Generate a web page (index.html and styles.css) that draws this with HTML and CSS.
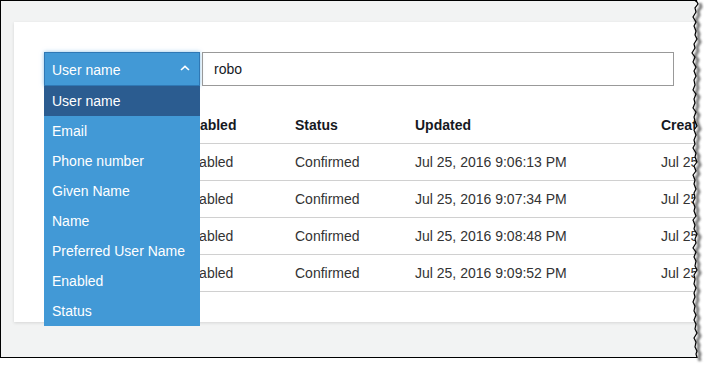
FILE: index.html
```html
<!DOCTYPE html>
<html lang="en">
<head>
    <meta charset="UTF-8">
    <meta name="viewport" content="width=device-width, initial-scale=1.0">
    <title>Users</title>
    <link rel="stylesheet" href="styles.css">
</head>
<body>
    <div class="frame">
        <div class="card">
            <div class="search">
                <div class="select">
                    <span>User name</span>
                    <svg class="caret" width="10" height="6" viewBox="0 0 10 6"><polyline points="1,5 5,1.3 9,5" fill="none" stroke="#fff" stroke-width="1.6"/></svg>
                </div>
                <div class="query">robo</div>
                <ul class="options">
                    <li class="active">User name</li>
                    <li>Email</li>
                    <li>Phone number</li>
                    <li>Given Name</li>
                    <li>Name</li>
                    <li>Preferred User Name</li>
                    <li>Enabled</li>
                    <li>Status</li>
                </ul>
            </div>
            <div class="users">
                <div class="row head">
                    <div class="c1"></div>
                    <div class="c2">Enabled</div>
                    <div class="c3">Status</div>
                    <div class="c4">Updated</div>
                    <div class="c5">Created</div>
                </div>
                <div class="row">
                    <div class="c1"></div>
                    <div class="c2">Enabled</div>
                    <div class="c3">Confirmed</div>
                    <div class="c4">Jul 25, 2016 9:06:13 PM</div>
                    <div class="c5">Jul 25, 2016 9:06:13 PM</div>
                </div>
                <div class="row">
                    <div class="c1"></div>
                    <div class="c2">Enabled</div>
                    <div class="c3">Confirmed</div>
                    <div class="c4">Jul 25, 2016 9:07:34 PM</div>
                    <div class="c5">Jul 25, 2016 9:07:34 PM</div>
                </div>
                <div class="row">
                    <div class="c1"></div>
                    <div class="c2">Enabled</div>
                    <div class="c3">Confirmed</div>
                    <div class="c4">Jul 25, 2016 9:08:48 PM</div>
                    <div class="c5">Jul 25, 2016 9:08:48 PM</div>
                </div>
                <div class="row">
                    <div class="c1"></div>
                    <div class="c2">Enabled</div>
                    <div class="c3">Confirmed</div>
                    <div class="c4">Jul 25, 2016 9:09:52 PM</div>
                    <div class="c5">Jul 25, 2016 9:09:52 PM</div>
                </div>
            </div>
        </div>
    </div>
    <svg class="tear" width="710" height="368" viewBox="0 0 710 368">
        <defs>
            <filter id="soft" x="-50%" y="-5%" width="200%" height="110%"><feGaussianBlur stdDeviation="1"/></filter>
        </defs>
        <polygon fill="#fff" points="697,0 698,4 695,8 696,12 693,17 696,22 694,26 696,31 695,35 697,39 694,44 695,48 692,53 695,57 693,62 696,67 694,71 696,76 694,80 695,85 693,90 696,94 694,99 695,103 693,108 696,112 694,117 695,121 697,126 694,130 696,135 694,140 695,144 693,148 696,153 695,157 697,162 694,166 696,171 693,175 695,180 694,184 696,189 694,193 695,198 693,202 695,207 694,211 696,216 693,220 695,225 694,229 697,234 695,239 696,243 693,248 696,252 694,257 696,261 695,266 697,270 694,275 695,279 694,284 696,288 694,293 695,297 693,302 695,306 694,311 696,315 694,320 696,324 695,329 697,333 694,338 696,342 695,347 697,351 696,354 697,358 697,368 710,368 710,0"/>
        <polyline fill="none" stroke="#777" stroke-width="3" filter="url(#soft)" transform="translate(3,3)" points="697,0 698,4 695,8 696,12 693,17 696,22 694,26 696,31 695,35 697,39 694,44 695,48 692,53 695,57 693,62 696,67 694,71 696,76 694,80 695,85 693,90 696,94 694,99 695,103 693,108 696,112 694,117 695,121 697,126 694,130 696,135 694,140 695,144 693,148 696,153 695,157 697,162 694,166 696,171 693,175 695,180 694,184 696,189 694,193 695,198 693,202 695,207 694,211 696,216 693,220 695,225 694,229 697,234 695,239 696,243 693,248 696,252 694,257 696,261 695,266 697,270 694,275 695,279 694,284 696,288 694,293 695,297 693,302 695,306 694,311 696,315 694,320 696,324 695,329 697,333 694,338 696,342 695,347 697,351 696,354 697,358"/>
        <polyline fill="none" stroke="#000" stroke-width="1.2" points="690,0.5 695,0.5 697,2 698,4 695,8 696,12 693,17 696,22 694,26 696,31 695,35 697,39 694,44 695,48 692,53 695,57 693,62 696,67 694,71 696,76 694,80 695,85 693,90 696,94 694,99 695,103 693,108 696,112 694,117 695,121 697,126 694,130 696,135 694,140 695,144 693,148 696,153 695,157 697,162 694,166 696,171 693,175 695,180 694,184 696,189 694,193 695,198 693,202 695,207 694,211 696,216 693,220 695,225 694,229 697,234 695,239 696,243 693,248 696,252 694,257 696,261 695,266 697,270 694,275 695,279 694,284 696,288 694,293 695,297 693,302 695,306 694,311 696,315 694,320 696,324 695,329 697,333 694,338 696,342 695,347 697,351 696,354 697,357.5 690,357.5"/>
    </svg>
</body>
</html>
```

FILE: styles.css
```css
body {
    margin: 0;
    background-color: #fff;
    font-family: "Liberation Sans", Arial, sans-serif;
    font-size: 14px;
}
.frame {
    position: relative;
    width: 704px;
    height: 356px;
    border: 1px solid #000;
    border-right: none;
    background-color: #f2f3f3;
    box-shadow: 4px 4px 3px rgba(0, 0, 0, 0.45);
    overflow: hidden;
}
.card {
    margin: 21px 0 0 13px;
    width: 760px;
    height: 270px;
    padding: 30px 0 0 30px;
    background-color: #fff;
    box-shadow: 0 1px 3px rgba(0, 0, 0, 0.12);
}
.search {
    position: relative;
    display: flex;
    gap: 2px;
}
.select {
    box-sizing: border-box;
    width: 156px;
    height: 34px;
    padding: 1px 7px 0;
    display: flex;
    align-items: center;
    justify-content: space-between;
    background-color: #4299d6;
    border: 1px solid #2f78b5;
    box-shadow: 0 0 4px rgba(66, 153, 214, 0.6);
    color: #fff;
}
.caret {
    margin-right: 2px;
    margin-top: -3px;
}
.query {
    box-sizing: border-box;
    width: 472px;
    height: 34px;
    padding: 0 11px;
    display: flex;
    align-items: center;
    border: 1px solid #999;
    color: #16191f;
}
.options {
    position: absolute;
    top: 34px;
    left: 0;
    width: 156px;
    margin: 0;
    padding: 0;
    list-style: none;
    background-color: #4299d6;
    color: #fff;
    z-index: 2;
}
.options li {
    height: 30px;
    line-height: 31px;
    padding-left: 8px;
}
.options li.active {
    background-color: #2b5c90;
}
.users {
    margin-top: 21px;
    color: #333;
}
.row {
    display: flex;
    align-items: center;
    height: 36px;
    border-bottom: 1px solid #d0d0d0;
}
.row div {
    box-sizing: border-box;
    flex-shrink: 0;
    padding-left: 10px;
    white-space: nowrap;
}
.head {
    font-weight: bold;
    color: #16191f;
}
.c1 { width: 128px; }
.c2 { width: 113px; }
.c3 { width: 120px; }
.c4 { width: 246px; }
.c5 { width: 200px; }
.tear {
    position: absolute;
    top: 0;
    left: 0;
    pointer-events: none;
}
```
